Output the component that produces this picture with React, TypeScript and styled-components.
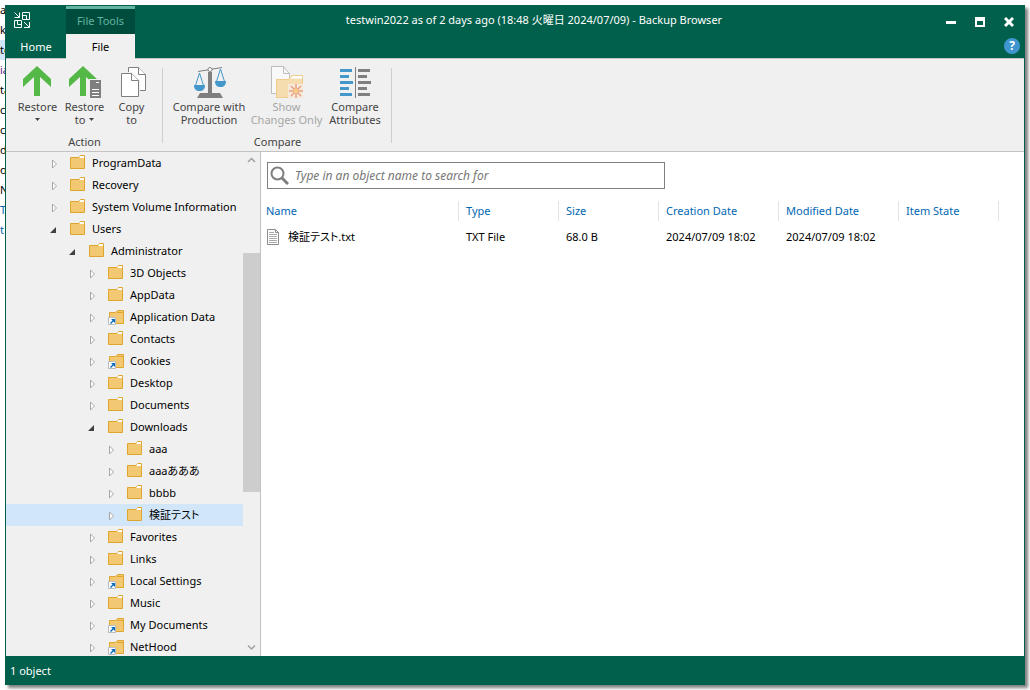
import React, { useState } from "react";
import styled, { createGlobalStyle } from "styled-components";

const color = {
  green: "#00604b",
  greenDark: "#004c3c",
  mint: "#62b5a0",
  panel: "#f0f0f0",
  line: "#c3c3c3",
  blue: "#0067b3",
  selected: "#d1e6f9",
  ribbonText: "#444444",
};

const GlobalStyle = createGlobalStyle`
  *, *::before, *::after { box-sizing: border-box; }
  html, body, #root { height: 100%; }
  body {
    margin: 0;
    overflow: hidden;
    background: #ffffff;
    color: #000000;
    font: 11px/16px "Noto Sans", "Noto Sans CJK JP", sans-serif;
    font-feature-settings: "palt";
  }
  button, input { font: inherit; color: inherit; }
  button { padding: 0; border: 0; background: none; cursor: pointer; }
  svg { display: block; flex: none; }
`;

const Desktop = styled.div`
  display: flex;
  height: 100%;
`;

const Backdrop = styled.ul`
  display: flex;
  flex-direction: column;
  flex: none;
  width: 5px;
  margin: 0;
  padding: 0;
  overflow: hidden;
  list-style: none;
`;

const BackdropLine = styled.li<{ $active?: boolean; $tint?: string }>`
  line-height: 20px;
  white-space: nowrap;
  background: ${(p) => (p.$active ? color.selected : "transparent")};
  color: ${(p) => p.$tint ?? "#000000"};
`;

const Window = styled.main`
  display: flex;
  flex: 1;
  flex-direction: column;
  min-width: 0;
  margin: 5px 5px 5px 0;
  border: 1px solid ${color.green};
  border-bottom: 0;
  background: #ffffff;
  box-shadow: 3px 3px 3px rgba(0, 0, 0, 0.5);
`;

const Header = styled.header`
  display: grid;
  flex: none;
  grid-template-columns: 60px 69px 1fr 91px;
  grid-template-rows: 28px 24px;
  border-bottom: 1px solid ${color.line};
  background: ${color.green};
  color: #ffffff;
`;

const LogoCell = styled.div`
  padding: 6px 8px;
`;

const ContextTab = styled.div`
  border-top: 3px solid ${color.mint};
  background: ${color.greenDark};
  color: ${color.mint};
  line-height: 24px;
  text-align: center;
`;

const Title = styled.h1`
  margin: 0;
  overflow: hidden;
  font-size: 11px;
  font-weight: 400;
  line-height: 28px;
  text-align: center;
  text-overflow: ellipsis;
  white-space: nowrap;
`;

const WindowControls = styled.div`
  display: flex;
  align-items: center;
  justify-content: flex-end;
  gap: 19px;
  padding: 4px 10px 0 0;
`;

const RibbonTab = styled.button<{ $active?: boolean }>`
  height: 25px;
  padding-top: 1px;
  background: ${(p) => (p.$active ? color.panel : "transparent")};
  color: ${(p) => (p.$active ? "#000000" : "#ffffff")};
`;

const HelpCell = styled.div`
  display: flex;
  grid-column: 4;
  align-items: center;
  justify-content: flex-end;
  padding-right: 4px;
`;

const HelpButton = styled.button`
  width: 16px;
  height: 16px;
  border-radius: 50%;
  background: #3f96cf;
  color: #ffffff;
  font-size: 12px;
  font-weight: 700;
`;

const Ribbon = styled.div`
  display: flex;
  flex: none;
  border-bottom: 1px solid ${color.line};
  background: ${color.panel};
  color: ${color.ribbonText};
`;

const RibbonGroup = styled.section<{ $inset: number }>`
  display: flex;
  flex-direction: column;
  position: relative;
  height: 92px;
  padding: 7px ${(p) => p.$inset}px 0;

  &::after {
    content: "";
    position: absolute;
    top: 9px;
    right: 0;
    bottom: 8px;
    width: 1px;
    background: #cfcfcf;
  }
`;

const RibbonRow = styled.div`
  display: flex;
  height: 68px;
`;

const RibbonButton = styled.button<{ $width: number }>`
  display: flex;
  flex-direction: column;
  align-items: center;
  width: ${(p) => p.$width}px;
  line-height: 13px;
  white-space: nowrap;

  &:disabled {
    color: #a6a6a6;
    cursor: default;
  }
`;

const RibbonCaption = styled.span`
  display: flex;
  flex-direction: column;
  align-items: center;
  padding-top: 2px;
`;

const CaptionLine = styled.span`
  display: flex;
  align-items: center;
  gap: 4px;
  height: 13px;
`;

const GroupName = styled.h2`
  margin: 0;
  font-size: 11px;
  font-weight: 400;
  line-height: 16px;
  text-align: center;
`;

const Body = styled.div`
  display: flex;
  flex: 1;
  min-height: 0;
`;

const TreePane = styled.nav`
  display: flex;
  flex: none;
  width: 255px;
  border-right: 1px solid ${color.line};
  background: ${color.panel};
`;

const TreeList = styled.ul`
  flex: 1;
  min-width: 0;
  margin: 0;
  padding: 0;
  overflow: hidden;
  list-style: none;
`;

const TreeRow = styled.li<{ $level: number; $selected: boolean }>`
  display: flex;
  align-items: center;
  height: 22px;
  padding-left: ${(p) => 40 + p.$level * 19}px;
  background: ${(p) => (p.$selected ? color.selected : "transparent")};
  white-space: nowrap;
  cursor: default;
`;

const Expander = styled.button`
  width: 16px;
  height: 16px;
  margin-right: 8px;
`;

const TreeName = styled.span`
  padding-left: 6px;
`;

const ScrollBar = styled.div`
  display: flex;
  flex: none;
  flex-direction: column;
  width: 17px;
`;

const ScrollButton = styled.button`
  display: grid;
  place-items: center;
  height: 17px;
`;

const ScrollTrack = styled.div`
  display: grid;
  flex: 1;
  grid-template-rows: 84fr 239fr 147fr;
`;

const ScrollThumb = styled.div`
  grid-row: 2;
  background: #cdcdcd;
`;

const FilePane = styled.section`
  flex: 1;
  min-width: 0;
  padding-top: 10px;
  overflow: hidden;
`;

const SearchBox = styled.label`
  display: flex;
  align-items: center;
  width: 398px;
  max-width: 100%;
  height: 27px;
  margin-left: 6px;
  padding-left: 2px;
  border: 1px solid #808080;
`;

const SearchInput = styled.input`
  flex: 1;
  min-width: 0;
  padding: 0 0 0 6px;
  border: 0;
  outline: 0;
  background: none;
  font-size: 12px;
  font-style: italic;

  &::placeholder {
    color: #777777;
    opacity: 1;
  }
`;

const FileTable = styled.table`
  width: 738px;
  margin-top: 9px;
  border-collapse: collapse;
  table-layout: fixed;
  text-align: left;
  white-space: nowrap;
`;

const Column = styled.col<{ $width: number }>`
  width: ${(p) => p.$width}px;
`;

const HeadCell = styled.th`
  height: 26px;
  padding: 0;
  color: ${color.blue};
  font-weight: 400;
`;

const HeadLabel = styled.div`
  padding-left: 7px;
  border-right: 1px solid #e3e3e3;
  line-height: 20px;

  ${HeadCell}:first-child & {
    padding-left: 5px;
  }
`;

const Cell = styled.td`
  height: 26px;
  padding: 0 0 0 7px;

  &:first-child {
    padding-left: 6px;
  }
`;

const FileName = styled.div`
  display: flex;
  align-items: center;
  gap: 8px;
`;

const StatusBar = styled.footer`
  flex: none;
  height: 29px;
  padding-left: 4px;
  background: ${color.green};
  color: #ffffff;
  line-height: 29px;
`;

const LogoIcon = () => (
  <svg width="16" height="16" viewBox="0 0 16 16" fill="none" stroke="#ffffff" aria-hidden="true">
    <path d="M0.5 0.5L5 5M0.5 5.5H5.5V0.5M8.5 4V0.5H15.5V7.5H12M8.5 3.5H12.5V7.5H8.5ZM4 8.5H0.5V15.5H7.5V12M3.5 8.5H7.5V12.5H3.5ZM10 10L15 15M15.5 10V15.5H10" />
  </svg>
);

const MinimizeIcon = () => (
  <svg width="10" height="10" aria-hidden="true">
    <path d="M0 4h10v3H0z" fill="#ffffff" />
  </svg>
);

const MaximizeIcon = () => (
  <svg width="10" height="10" aria-hidden="true">
    <path fillRule="evenodd" d="M0 0h10v10H0zM2 4v4h6V4z" fill="#ffffff" />
  </svg>
);

const CloseIcon = () => (
  <svg width="10" height="10" aria-hidden="true">
    <path d="M1 1l8 8M9 1l-8 8" stroke="#ffffff" strokeWidth="3" />
  </svg>
);

const DropMark = () => (
  <svg width="5" height="3" aria-hidden="true">
    <path d="M0 0h5L2.5 3z" fill="#444444" />
  </svg>
);

const RestoreIcon = () => (
  <svg width="29" height="32" aria-hidden="true">
    <path d="M14 0L28 13V21L17 11V30H11V11L0 21V13Z" fill="#55b948" />
  </svg>
);

const RestoreToIcon = () => (
  <svg width="32" height="32" aria-hidden="true">
    <path d="M14 0L28 13V21L17 11V30H11V11L0 21V13Z" fill="#55b948" />
    <path d="M20 13h13v20H20z" fill={color.panel} />
    <path d="M21 14h11v18H21z" fill="#7f7f7f" />
    <path d="M27 16.5h3M23 23.5h7M23 26.5h7M23 29.5h7" stroke="#ffffff" />
  </svg>
);

const CopyIcon = () => (
  <svg width="32" height="32" fill="#ffffff" stroke="#7f7f7f" aria-hidden="true">
    <path d="M12.5 1.5h10l7 7v16h-17z" />
    <path d="M22.5 1.5v7h7" />
    <path d="M5.5 7.5h10l7 7v16h-17z" stroke={color.panel} strokeWidth="3" />
    <path d="M5.5 7.5h10l7 7v16h-17z" />
    <path d="M15.5 7.5v7h7" />
  </svg>
);

const ScalesIcon = () => (
  <svg width="34" height="32" aria-hidden="true">
    <path d="M8 27h20l3 5H5zM16 6h4v21h-4z" fill="#7f7f7f" />
    <path d="M6 5.5L30 1.5" stroke="#7f7f7f" />
    <circle cx="18" cy="3.5" r="2" fill="#ffffff" stroke="#7f7f7f" />
    <path d="M3.5 19.5L7.5 7L11.5 19.5M24.5 15.5L28.5 3L32.5 15.5" fill="none" stroke="#4397cb" />
    <path d="M2 19h11c0 4-2 6-5.5 6S2 23 2 19zM23 15h11c0 4-2 6-5.5 6S23 19 23 15z" fill="#4397cb" />
  </svg>
);

const ChangesIcon = () => (
  <svg width="33" height="32" aria-hidden="true">
    <path d="M1.5 27.5V0.5h12l6 7v20z" fill="#f9f9f9" stroke="#bdbdbd" />
    <path d="M13.5 0.5v7h6" fill="none" stroke="#bdbdbd" />
    <path d="M6 13h12l4-4h11v23H6z" fill="#f5ddb0" />
    <path d="M18 31.5H6.5v-18h12l4-4h10v9" fill="none" stroke="#efcb8c" />
    <path d="M20 12.5l3-2.5h9v2.5z" fill="#ffffff" />
    <path d="M18 18h15v14H18z" fill="#f6e9d9" />
    <path d="M26 18v14M19 25h14M21 20l10 10M31 20L21 30" stroke="#e9a184" strokeWidth="1.5" />
    <circle cx="26" cy="25" r="3" fill="#f6c98d" stroke="#eeb08a" />
  </svg>
);

const AttributesIcon = () => (
  <svg width="32" height="32" aria-hidden="true">
    <path d="M1 3h12v3H1zM1 9h9v3H1zM1 15h13v3H1zM1 21h9v3H1zM1 27h12v3H1z" fill="#4397cb" />
    <path d="M19 3h12v3H19zM19 9h9v3H19zM19 15h13v3H19zM19 21h9v3H19zM19 27h12v3H19z" fill="#7f7f7f" />
    <path d="M16 1h1v31h-1z" fill="#7f7f7f" />
  </svg>
);

const FolderIcon = ({ linked }: { linked?: boolean }) =>
  linked ? (
    <svg width="16" height="16" aria-hidden="true">
      <path d="M1.5 14.5v-11h6l2-2h6v13z" fill="#f2c872" stroke="#dfa62f" />
      <path d="M9 3.5h6" stroke="#dfa62f" />
      <path d="M0.5 8.5h7v7h-7z" fill="#ffffff" stroke="#b9bcc0" />
      <path d="M3 10h4v4l-1.5-1.5L3 15l-1-1 2.5-2.5z" fill="#0a6cbc" />
    </svg>
  ) : (
    <svg width="16" height="16" aria-hidden="true">
      <path d="M8.5 3.5l2-3h4v3z" fill="#ffffff" stroke="#dfa62f" />
      <path d="M0.5 13.5v-11h14v11z" fill="#f2c872" stroke="#dfa62f" />
      <path d="M9 3l1.5-2H14v2z" fill="#ffffff" />
    </svg>
  );

const BranchMark = ({ open }: { open: boolean }) => (
  <svg width="16" height="16" aria-hidden="true">
    {open ? (
      <path d="M10 6v6H4z" fill="#404040" />
    ) : (
      <path d="M6.5 5v8l4-4z" fill="#ffffff" stroke="#a6a6a6" />
    )}
  </svg>
);

const Chevron = ({ up }: { up?: boolean }) => (
  <svg width="9" height="7" aria-hidden="true">
    <path d={up ? "M1 5l3.5-3.5L8 5" : "M1 1.5L4.5 5 8 1.5"} fill="none" stroke="#a0a0a0" strokeWidth="1.5" />
  </svg>
);

const SearchIcon = () => (
  <svg width="19" height="19" fill="none" stroke="#7f7f7f" aria-hidden="true">
    <circle cx="7.5" cy="7.5" r="6" strokeWidth="2" />
    <path d="M12 12l6 6" strokeWidth="3" />
  </svg>
);

const TextFileIcon = () => (
  <svg width="13" height="16" fill="none" stroke="#8c8c8c" aria-hidden="true">
    <path d="M0.5 0.5h8l3 3v12h-11z" fill="#ffffff" />
    <path d="M8.5 0.5v3h3" />
    <path d="M2 3.5h5M2 5.5h8M2 7.5h8M2 9.5h8M2 11.5h8M2 13.5h8" stroke="#aaaaaa" />
  </svg>
);

interface Folder {
  name: string;
  level: number;
  open?: boolean;
  linked?: boolean;
}

const folders: Folder[] = [
  { name: "ProgramData", level: 0 },
  { name: "Recovery", level: 0 },
  { name: "System Volume Information", level: 0 },
  { name: "Users", level: 0, open: true },
  { name: "Administrator", level: 1, open: true },
  { name: "3D Objects", level: 2 },
  { name: "AppData", level: 2 },
  { name: "Application Data", level: 2, linked: true },
  { name: "Contacts", level: 2 },
  { name: "Cookies", level: 2, linked: true },
  { name: "Desktop", level: 2 },
  { name: "Documents", level: 2 },
  { name: "Downloads", level: 2, open: true },
  { name: "aaa", level: 3 },
  { name: "aaaあああ", level: 3 },
  { name: "bbbb", level: 3 },
  { name: "検証テスト", level: 3 },
  { name: "Favorites", level: 2 },
  { name: "Links", level: 2 },
  { name: "Local Settings", level: 2, linked: true },
  { name: "Music", level: 2 },
  { name: "My Documents", level: 2, linked: true },
  { name: "NetHood", level: 2, linked: true },
];

const columns = [
  { label: "Name", width: 198 },
  { label: "Type", width: 100 },
  { label: "Size", width: 100 },
  { label: "Creation Date", width: 120 },
  { label: "Modified Date", width: 120 },
  { label: "Item State", width: 100 },
];

const backdropLines = [
  { text: "as" },
  { text: "k" },
  { text: "te", active: true },
  { text: "ia", tint: "#5b1a8b" },
  { text: "ta" },
  { text: "c" },
  { text: "c" },
  { text: "d" },
  { text: "o" },
  { text: "N" },
  { text: "TC", tint: color.blue },
  { text: "t", tint: color.blue },
];

export default function App() {
  const [selected, setSelected] = useState("検証テスト");
  const [query, setQuery] = useState("");

  return (
    <>
      <GlobalStyle />
      <Desktop>
        <Backdrop aria-hidden="true">
          {backdropLines.map((line, i) => (
            <BackdropLine key={i} $active={line.active} $tint={line.tint}>
              {line.text}
            </BackdropLine>
          ))}
        </Backdrop>
        <Window>
          <Header>
            <LogoCell>
              <LogoIcon />
            </LogoCell>
            <ContextTab>File Tools</ContextTab>
            <Title>testwin2022 as of 2 days ago (18:48 火曜日 2024/07/09) - Backup Browser</Title>
            <WindowControls>
              <button aria-label="Minimize"><MinimizeIcon /></button>
              <button aria-label="Maximize"><MaximizeIcon /></button>
              <button aria-label="Close"><CloseIcon /></button>
            </WindowControls>
            <RibbonTab>Home</RibbonTab>
            <RibbonTab $active>File</RibbonTab>
            <HelpCell>
              <HelpButton aria-label="Help">?</HelpButton>
            </HelpCell>
          </Header>

          <Ribbon>
            <RibbonGroup $inset={8}>
              <RibbonRow>
                <RibbonButton $width={47}>
                  <RestoreIcon />
                  <RibbonCaption>
                    <CaptionLine>Restore</CaptionLine>
                    <CaptionLine><DropMark /></CaptionLine>
                  </RibbonCaption>
                </RibbonButton>
                <RibbonButton $width={47}>
                  <RestoreToIcon />
                  <RibbonCaption>
                    <CaptionLine>Restore</CaptionLine>
                    <CaptionLine>to <DropMark /></CaptionLine>
                  </RibbonCaption>
                </RibbonButton>
                <RibbonButton $width={47}>
                  <CopyIcon />
                  <RibbonCaption>
                    <CaptionLine>Copy</CaptionLine>
                    <CaptionLine>to</CaptionLine>
                  </RibbonCaption>
                </RibbonButton>
              </RibbonRow>
              <GroupName>Action</GroupName>
            </RibbonGroup>
            <RibbonGroup $inset={6}>
              <RibbonRow>
                <RibbonButton $width={80}>
                  <ScalesIcon />
                  <RibbonCaption>
                    <CaptionLine>Compare with</CaptionLine>
                    <CaptionLine>Production</CaptionLine>
                  </RibbonCaption>
                </RibbonButton>
                <RibbonButton $width={75} disabled>
                  <ChangesIcon />
                  <RibbonCaption>
                    <CaptionLine>Show</CaptionLine>
                    <CaptionLine>Changes Only</CaptionLine>
                  </RibbonCaption>
                </RibbonButton>
                <RibbonButton $width={62}>
                  <AttributesIcon />
                  <RibbonCaption>
                    <CaptionLine>Compare</CaptionLine>
                    <CaptionLine>Attributes</CaptionLine>
                  </RibbonCaption>
                </RibbonButton>
              </RibbonRow>
              <GroupName>Compare</GroupName>
            </RibbonGroup>
          </Ribbon>

          <Body>
            <TreePane aria-label="Folders">
              <TreeList>
                {folders.map((folder) => (
                  <TreeRow
                    key={folder.name}
                    $level={folder.level}
                    $selected={folder.name === selected}
                    onClick={() => setSelected(folder.name)}
                  >
                    <Expander aria-label={folder.name} aria-expanded={!!folder.open}>
                      <BranchMark open={!!folder.open} />
                    </Expander>
                    <FolderIcon linked={folder.linked} />
                    <TreeName>{folder.name}</TreeName>
                  </TreeRow>
                ))}
              </TreeList>
              <ScrollBar>
                <ScrollButton aria-label="Scroll up"><Chevron up /></ScrollButton>
                <ScrollTrack><ScrollThumb /></ScrollTrack>
                <ScrollButton aria-label="Scroll down"><Chevron /></ScrollButton>
              </ScrollBar>
            </TreePane>

            <FilePane>
              <SearchBox>
                <SearchIcon />
                <SearchInput
                  type="text"
                  aria-label="Search"
                  placeholder="Type in an object name to search for"
                  value={query}
                  onChange={(e) => setQuery(e.target.value)}
                />
              </SearchBox>
              <FileTable>
                <colgroup>
                  {columns.map((c) => (
                    <Column key={c.label} $width={c.width} />
                  ))}
                </colgroup>
                <thead>
                  <tr>
                    {columns.map((c) => (
                      <HeadCell key={c.label} scope="col">
                        <HeadLabel>{c.label}</HeadLabel>
                      </HeadCell>
                    ))}
                  </tr>
                </thead>
                <tbody>
                  <tr>
                    <Cell>
                      <FileName><TextFileIcon />検証テスト.txt</FileName>
                    </Cell>
                    <Cell>TXT File</Cell>
                    <Cell>68.0 B</Cell>
                    <Cell>2024/07/09 18:02</Cell>
                    <Cell>2024/07/09 18:02</Cell>
                    <Cell />
                  </tr>
                </tbody>
              </FileTable>
            </FilePane>
          </Body>

          <StatusBar>1 object</StatusBar>
        </Window>
      </Desktop>
    </>
  );
}
